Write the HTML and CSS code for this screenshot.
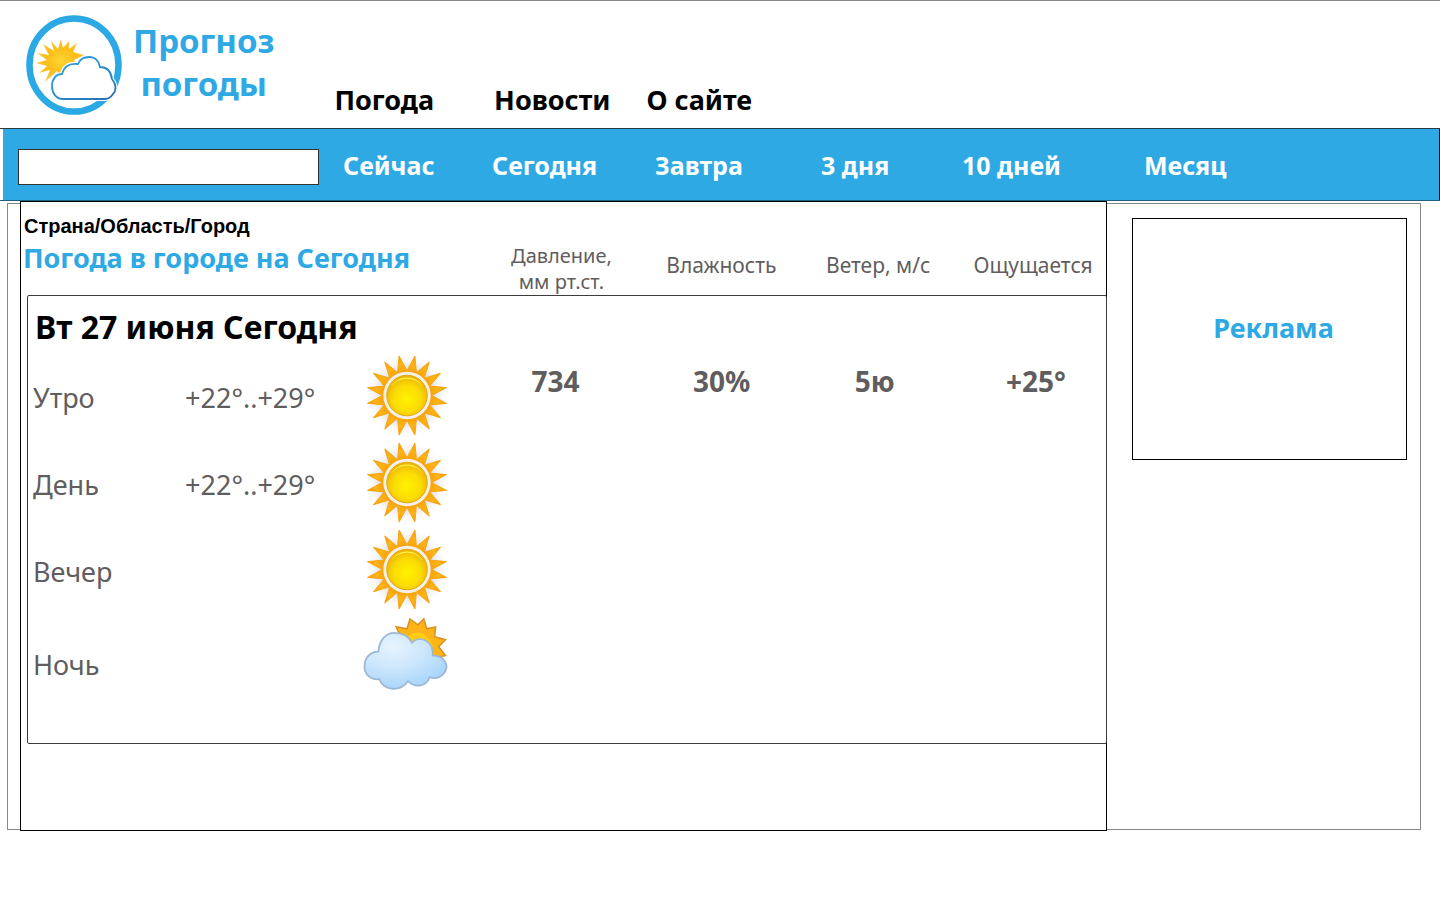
FILE: index.html
```html
<!DOCTYPE html>
<html lang="ru">
<head>
<meta charset="utf-8">
<title>Прогноз погоды</title>
<link rel="stylesheet" href="styles.css">
</head>
<body>
<svg class="sprite" aria-hidden="true">
  <defs>
    <radialGradient id="rays" cx="50%" cy="50%" r="50%">
      <stop offset="0.6" stop-color="#f8a30c"/><stop offset="0.8" stop-color="#fdb515"/><stop offset="1" stop-color="#f09a10"/>
    </radialGradient>
    <radialGradient id="disc" cx="50%" cy="58%" r="55%">
      <stop offset="0" stop-color="#fff200"/><stop offset="0.6" stop-color="#fbdc04"/><stop offset="1" stop-color="#eeb408"/>
    </radialGradient>
    <radialGradient id="halo" cx="50%" cy="50%" r="50%">
      <stop offset="0.6" stop-color="#dcdce4"/><stop offset="1" stop-color="#ffffff" stop-opacity="0"/>
    </radialGradient>
    <radialGradient id="logo-sun" cx="50%" cy="50%" r="50%">
      <stop offset="0" stop-color="#fcd535"/><stop offset="0.6" stop-color="#fbbd17"/><stop offset="1" stop-color="#f9c440"/>
    </radialGradient>
    <radialGradient id="cloud" cx="35%" cy="25%" r="80%">
      <stop offset="0" stop-color="#e6f3fe"/><stop offset="0.5" stop-color="#cbe6fc"/><stop offset="1" stop-color="#a3d3fa"/>
    </radialGradient>
    <linearGradient id="logo-cloud" x1="0" y1="0" x2="1" y2="1">
      <stop offset="0" stop-color="#2ba9e4"/><stop offset="1" stop-color="#2b6cb4"/>
    </linearGradient>
    <symbol id="sun" viewBox="-44 -44 88 88">
      <circle r="43" fill="url(#halo)"/>
      <path fill="url(#rays)" stroke="#f8a510" stroke-width="1" stroke-linejoin="round" d="M8 -40L9.500 -23L22.500 -34L17.500 -17.500L34 -22.500L23 -9.500L40 -8L25 0L40 8L23 9.500L34 22.500L17.500 17.500L22.500 34L9.500 23L8 40L0 25L-8 40L-9.500 23L-22.500 34L-17.500 17.500L-34 22.500L-23 9.500L-40 8L-25 0L-40 -8L-23 -9.500L-34 -22.500L-17.500 -17.500L-22.500 -34L-9.500 -23L-8 -40L0 -25Z"/>
      <circle r="24" fill="#f4f0e8"/>
      <circle r="20.500" fill="url(#disc)" stroke="#e0a810" stroke-width="1"/>
      <path d="M-16 -9A18.500 18.500 0 0 1 16 -9A20 20 0 0 0 -16 -9" fill="#fff04a"/>
    </symbol>
  </defs>
</svg>

<header class="header">
  <a class="brand" href="#">
    <svg class="brand-logo" viewBox="0 0 100 104" aria-hidden="true">
      <ellipse cx="50" cy="52" rx="44.500" ry="46.500" fill="#fff" stroke="#2ba9e4" stroke-width="6.500"/>
      <path fill="url(#logo-sun)" d="M37 26L39 35L45 28L45 36L53 30L49 39L60 42L50 47L62 65L45 61L38 67L33 58L21 69L26 57L15 60L23 53L12 50L23 47L13 40L25 42L19 31L30 38L27 28L34 36Z"/>
      <path class="logo-gap" d="M39 86C32 86 28 80 28 73C28 66 32 61 38 61C40 53 46 50 54 51C56 46 60 44 65 44C71 44 75 48 76 54C83 54 87 59 88 66C92 71 93 77 89 81C87 84 85 86 81 86Z"/>
      <path fill="#fff" stroke="url(#logo-cloud)" stroke-width="1.800" d="M39 86C32 86 28 80 28 73C28 66 32 61 38 61C40 53 46 50 54 51C56 46 60 44 65 44C71 44 75 48 76 54C83 54 87 59 88 66C92 71 93 77 89 81C87 84 85 86 81 86Z"/>
    </svg>
    <span class="brand-name">Прогноз<br>погоды</span>
  </a>
  <nav class="menu" aria-label="Разделы">
    <a href="#">Погода</a>
    <a href="#">Новости</a>
    <a href="#">О сайте</a>
  </nav>
</header>

<div class="bar-frame">
  <nav class="bar" aria-label="Период">
    <input class="search" type="text" aria-label="Город">
    <a href="#">Сейчас</a>
    <a href="#">Сегодня</a>
    <a href="#">Завтра</a>
    <a href="#">3 дня</a>
    <a href="#">10 дней</a>
    <a href="#">Месяц</a>
  </nav>
</div>

<div class="page">
  <main class="content">
    <p class="crumbs">Страна/Область/Город</p>
    <table class="forecast">
      <thead>
        <tr>
          <th class="title" colspan="3">Погода в городе на Сегодня</th>
          <th class="pressure">Давление,<br>мм рт.ст.</th>
          <th>Влажность</th>
          <th>Ветер, м/с</th>
          <th>Ощущается</th>
        </tr>
      </thead>
      <tbody>
        <tr class="date-row"><th class="date" colspan="7">Вт 27 июня Сегодня</th></tr>
        <tr>
          <th class="part">Утро</th><td class="temp">+22°..+29°</td>
          <td><svg class="icon" role="img" aria-label="Ясно"><use href="#sun"/></svg></td>
          <td class="value">734</td><td class="value">30%</td><td class="value">5ю</td><td class="value feels">+25°</td>
        </tr>
        <tr>
          <th class="part">День</th><td class="temp">+22°..+29°</td>
          <td><svg class="icon" role="img" aria-label="Ясно"><use href="#sun"/></svg></td>
          <td></td><td></td><td></td><td></td>
        </tr>
        <tr>
          <th class="part">Вечер</th><td></td>
          <td><svg class="icon" role="img" aria-label="Ясно"><use href="#sun"/></svg></td>
          <td></td><td></td><td></td><td></td>
        </tr>
        <tr class="night">
          <th class="part">Ночь</th><td></td>
          <td><svg class="icon" viewBox="0 0 88 88" role="img" aria-label="Облачно">
            <path fill="#fdb418" stroke="#dd8f22" stroke-width="1.500" d="M33 14L44 16L47 6L55 12L61 6L64 16L73 14L72 24L83 27L76 34L83 43L69 46L49 50Z"/>
            <path fill="#fdca14" d="M44 24Q59 12 70 32L71 45L54 45Z"/>
            <path fill="url(#cloud)" stroke="#9db8d2" stroke-width="1.800" d="M15 39C16 28 22 20 31 20C40 20 46 24 49 30C57 22 71 28 70 43C79 43 84 48 84 55C83 63 74 68 67 65C63 75 52 76 45 69C37 80 21 79 16 67C7 68 1 62 1 54C1 45 7 39 15 39Z"/>
          </svg></td>
          <td></td><td></td><td></td><td></td>
        </tr>
      </tbody>
    </table>
  </main>
  <aside class="side">
    <div class="ad">Реклама</div>
  </aside>
</div>
</body>
</html>
```
FILE: styles.css
```css
* { box-sizing: border-box; }

body {
  min-height: 100vh;
  margin: 0;
  background: #fff;
  color: #000;
  font-family: "Noto Sans", sans-serif;
}

a { color: inherit; text-decoration: none; }

.sprite { position: absolute; width: 0; height: 0; }

.header {
  display: flex;
  align-items: flex-end;
  gap: 60px;
  min-height: 128px;
  padding: 0 24px 8px;
  border-top: 1px solid #888;
}

.brand {
  display: flex;
  align-items: center;
  gap: 9px;
  padding-bottom: 3px;
  color: #2ea9e4;
}

.brand-logo { width: 100px; height: 104px; }
.logo-gap { fill: #fff; stroke: #fff; stroke-width: 4px; }

.brand-name {
  padding-bottom: 6px;
  font-size: 33px;
  font-weight: 700;
  line-height: 43px;
  text-align: center;
}

.menu {
  display: flex;
  font-size: 27px;
  font-weight: 700;
  line-height: 40px;
}

.menu a { margin-right: 36px; }
.menu a:first-child { margin-right: 60px; }

.bar-frame {
  padding-left: 3px;
  border-top: 1px solid #2a3a44;
  border-bottom: 1px solid #1f5f80;
}

.bar {
  display: grid;
  grid-template-columns: 301fr 149fr 163fr 166fr 141fr 182fr 319fr;
  align-items: center;
  min-height: 71px;
  padding: 4px 0 0 15px;
  border-right: 1px solid #000;
  background: #2ea9e4;
  color: #fff;
  font-size: 25px;
  font-weight: 700;
}

.bar a { padding: 0 0 4px 24px; line-height: 36px; }

.search {
  width: 100%;
  height: 36px;
  padding: 0 8px;
  border: 1px solid #333;
  background: #fff;
  font: inherit;
  color: #000;
}

.page {
  display: grid;
  grid-template-columns: 1087fr 313fr;
  margin: 2px 19px 0 7px;
  padding-left: 12px;
  border: 1px solid #888;
}

/* The forecast panel straddles the outer frame at top and bottom. */
.content {
  margin: -3px 0 -2px;
  padding-bottom: 86px;
  border: 1px solid #000;
  background: #fff;
}

.crumbs {
  margin: 0;
  padding: 12px 3px 0;
  font-family: "Liberation Sans", Arial, sans-serif;
  font-size: 20px;
  font-weight: 700;
  line-height: 24px;
}

.forecast, .forecast thead, .forecast tbody { display: block; }
.forecast tr { display: grid; align-items: center; }
.forecast th, .forecast td { padding: 0; text-align: center; color: #5f5d5e; }

.forecast thead tr {
  grid-template-columns: 452fr 178fr 142fr 172fr 142fr;
  min-height: 57px;
}

.forecast thead th {
  padding-bottom: 4px;
  font-size: 21px;
  font-weight: 400;
  line-height: 28px;
}

.forecast thead th:last-child { padding-right: 4px; }

.forecast thead .title {
  padding: 0 0 18px 2px;
  color: #2ea9e4;
  font-size: 27px;
  font-weight: 700;
  line-height: 36px;
  text-align: left;
}

.forecast thead .pressure { padding: 4px 0 0; font-size: 20px; line-height: 26px; }

.forecast tbody {
  margin: 0 -1px 0 6px;
  padding-bottom: 43px;
  border: 1px solid #3c3c3c;
  border-radius: 2px;
}

.forecast tbody tr {
  grid-template-columns: 133fr 186fr 120fr 176fr 156fr 150fr 156fr;
  min-height: 87px;
}

.forecast tbody .date-row { grid-template-columns: 1fr; min-height: 56px; }

.forecast tbody .date {
  padding: 6px 7px 0;
  color: #000;
  font-size: 32px;
  line-height: 44px;
  text-align: left;
}

.forecast .part, .forecast .temp {
  padding-top: 4px;
  font-size: 27px;
  font-weight: 400;
  line-height: 36px;
}

.forecast .part { padding-left: 5px; text-align: left; }
.forecast .temp { padding-right: 8px; }
.forecast .night .part { padding-top: 16px; }

.forecast .value {
  padding-bottom: 30px;
  font-size: 28px;
  font-weight: 700;
  line-height: 36px;
}

.forecast .feels { padding-left: 16px; }

.icon { display: block; width: 88px; height: 87px; margin: 0 auto; }

.side { padding: 14px 13px 0 25px; }

.ad {
  display: grid;
  place-items: center;
  min-height: 242px;
  padding: 0 0 24px 8px;
  border: 1px solid #000;
  color: #2ea9e4;
  font-size: 27px;
  font-weight: 700;
}
```
